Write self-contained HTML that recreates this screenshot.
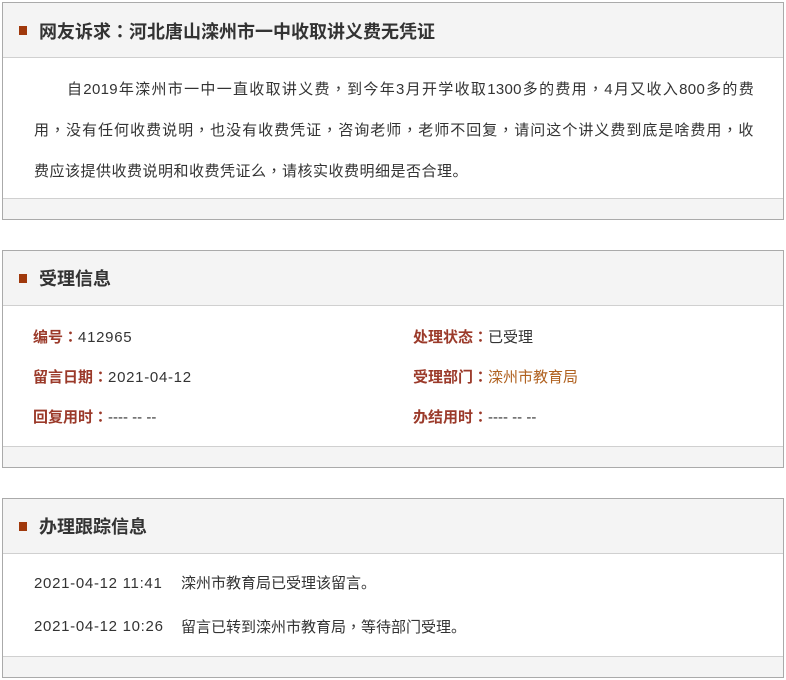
<!DOCTYPE html>
<html><head><meta charset="utf-8"><style>
*{margin:0;padding:0;box-sizing:border-box}
body{width:786px;height:680px;background:#fff;font-family:"Liberation Sans","Noto Sans CJK SC",sans-serif;color:#333;position:relative;overflow:hidden}
.c{font-family:"Noto Sans CJK TC",sans-serif}
.box{position:absolute;left:2px;width:782px;border:1px solid #aaa;background:#fff}
.hd{height:55px;background:#f4f4f4;border-bottom:1px solid #d0d0d0;position:relative}
.hd i{position:absolute;left:16px;top:23px;width:8px;height:9px;background:#a0390c}
.hd b{position:absolute;left:36px;top:16px;font-size:18px;line-height:24px;color:#333}
.ft{position:absolute;left:0;right:0;bottom:0;height:21px;background:#f4f4f4;border-top:1px solid #d0d0d0}
.p{position:absolute;left:31px;width:720px;font-size:15px;letter-spacing:0.5px;line-height:40px}
.p > div{text-align:justify;text-align-last:justify;white-space:nowrap}
.p > div.l{text-align-last:left}
.row{position:absolute;font-size:15px;line-height:20px}
.lb{color:#9b3a2a;font-weight:bold}
.or{color:#b0611f}
.t{letter-spacing:0.7px}
</style></head><body>
<div class="box" style="top:2px;height:218px">
 <div class="hd"><i></i><b>网友诉求<span class="c">：</span>河北唐山滦州市一中收取讲义费无凭证</b></div>
 <div class="p" style="top:66px">
  <div style="padding-left:33px;letter-spacing:0.3px">自2019年滦州市一中一直收取讲义费<span class="c">，</span>到今年3月开学收取1300多的费用<span class="c">，</span>4月又收入800多的费</div>
  <div>用<span class="c">，</span>没有任何收费说明<span class="c">，</span>也没有收费凭证<span class="c">，</span>咨询老师<span class="c">，</span>老师不回复<span class="c">，</span>请问这个讲义费到底是啥费用<span class="c">，</span>收</div>
  <div class="l">费应该提供收费说明和收费凭证么<span class="c">，</span>请核实收费明细是否合理。</div>
 </div>
 <div class="ft"></div>
</div>
<div class="box" style="top:250px;height:218px">
 <div class="hd"><i></i><b>受理信息</b></div>
 <div class="row" style="left:30px;top:76px"><span class="lb">编号<span class="c">：</span></span><span class="t">412965</span></div>
 <div class="row" style="left:410px;top:76px"><span class="lb">处理状态<span class="c">：</span></span>已受理</div>
 <div class="row" style="left:30px;top:116px"><span class="lb">留言日期<span class="c">：</span></span><span class="t">2021-04-12</span></div>
 <div class="row" style="left:410px;top:116px"><span class="lb">受理部门<span class="c">：</span></span><span class="or">滦州市教育局</span></div>
 <div class="row" style="left:30px;top:156px"><span class="lb">回复用时<span class="c">：</span></span>---- -- --</div>
 <div class="row" style="left:410px;top:156px"><span class="lb">办结用时<span class="c">：</span></span>---- -- --</div>
 <div class="ft"></div>
</div>
<div class="box" style="top:498px;height:180px">
 <div class="hd"><i></i><b>办理跟踪信息</b></div>
 <div class="row t" style="left:31px;top:75px">2021-04-12 11:41</div>
 <div class="row" style="left:178px;top:75px">滦州市教育局已受理该留言。</div>
 <div class="row t" style="left:31px;top:118px">2021-04-12 10:26</div>
 <div class="row" style="left:178px;top:118px">留言已转到滦州市教育局<span class="c">，</span>等待部门受理。</div>
 <div class="ft"></div>
</div>
</body></html>
